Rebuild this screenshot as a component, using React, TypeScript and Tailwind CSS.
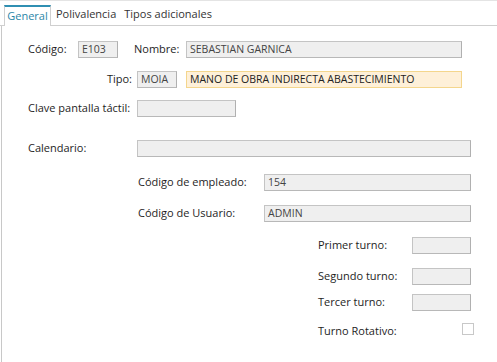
import React from "react";

const box = "h-[17px] bg-[#efefef] border border-[#c4c4c4] border-r-[#b0b0b0] border-b-[#b8b8b8] flex items-center pl-[3px] text-[#444] text-[10.5px] leading-none";

export default function App() {
  return (
    <div className="w-[497px] h-[362px] bg-white font-['Open_Sans',sans-serif] text-[11px] text-[#1e1e1e] overflow-hidden">
      <div className="h-[26px] flex items-end border-t border-[#e4e4e4]">
        <div className="w-[4px] h-full border-b border-[#cfcfcf]" />
        <div className="h-[21px] w-[47px] border-t-2 border-t-[#2f8fb2] border-l border-r border-[#d0d0d0] bg-white flex items-center justify-center text-[#2a86a8]">
          General
        </div>
        <div className="h-full flex-1 flex items-end border-b border-[#cfcfcf]">
          <div className="h-[21px] flex items-center pl-[5px] text-[#333]">Polivalencia</div>
          <div className="h-[21px] flex items-center pl-[8px] text-[#333]">Tipos adicionales</div>
        </div>
      </div>
      <div className="ml-[1px] h-[336px] border-l border-[#c8c8c8] flex flex-col">
        <div className="mt-[15px] flex items-center h-[17px]">
          <div className="w-[76px] pl-[26px]">Código:</div>
          <div className={box + " w-[40px]"}>E103</div>
          <div className="w-[68px] pl-[16px]">Nombre:</div>
          <div className={box + " w-[276px]"}>SEBASTIAN GARNICA</div>
        </div>
        <div className="mt-[13px] flex items-center h-[17px]">
          <div className="w-[135px] text-right pr-[5px]">Tipo:</div>
          <div className={box + " w-[40px]"}>MOIA</div>
          <div className="w-[9px]" />
          <div className="h-[17px] w-[276px] bg-[#fef0d9] border border-[#f4d68d] flex items-center pl-[3px] text-[#222] text-[10.5px] leading-none">
            MANO DE OBRA INDIRECTA ABASTECIMIENTO
          </div>
        </div>
        <div className="mt-[12px] flex items-center h-[17px]">
          <div className="w-[135px] pl-[26px]">Clave pantalla táctil:</div>
          <div className={box + " w-[99px]"} />
        </div>
        <div className="mt-[23px] flex items-center h-[17px]">
          <div className="w-[135px] pl-[26px]">Calendario:</div>
          <div className={box + " w-[334px]"} />
        </div>
        <div className="mt-[17px] flex items-center h-[17px]">
          <div className="w-[262px] pl-[136px]">Código de empleado:</div>
          <div className={box + " w-[207px]"}>154</div>
        </div>
        <div className="mt-[14px] flex items-center h-[17px]">
          <div className="w-[262px] pl-[136px]">Código de Usuario:</div>
          <div className={box + " w-[207px]"}>ADMIN</div>
        </div>
        <div className="mt-[15px] flex items-center h-[17px]">
          <div className="w-[410px] pl-[316px]">Primer turno:</div>
          <div className={box + " w-[59px]"} />
        </div>
        <div className="mt-[14px] flex items-center h-[17px]">
          <div className="w-[410px] pl-[316px]">Segundo turno:</div>
          <div className={box + " w-[59px]"} />
        </div>
        <div className="mt-[9px] flex items-center h-[17px]">
          <div className="w-[410px] pl-[316px]">Tercer turno:</div>
          <div className={box + " w-[59px]"} />
        </div>
        <div className="mt-[12px] flex items-center h-[17px]">
          <div className="w-[460px] pl-[316px]">Turno Rotativo:</div>
          <div className="w-[12px] h-[12px] border border-[#c8c8c8] bg-white -mt-[5px]" />
        </div>
      </div>
    </div>
  );
}
